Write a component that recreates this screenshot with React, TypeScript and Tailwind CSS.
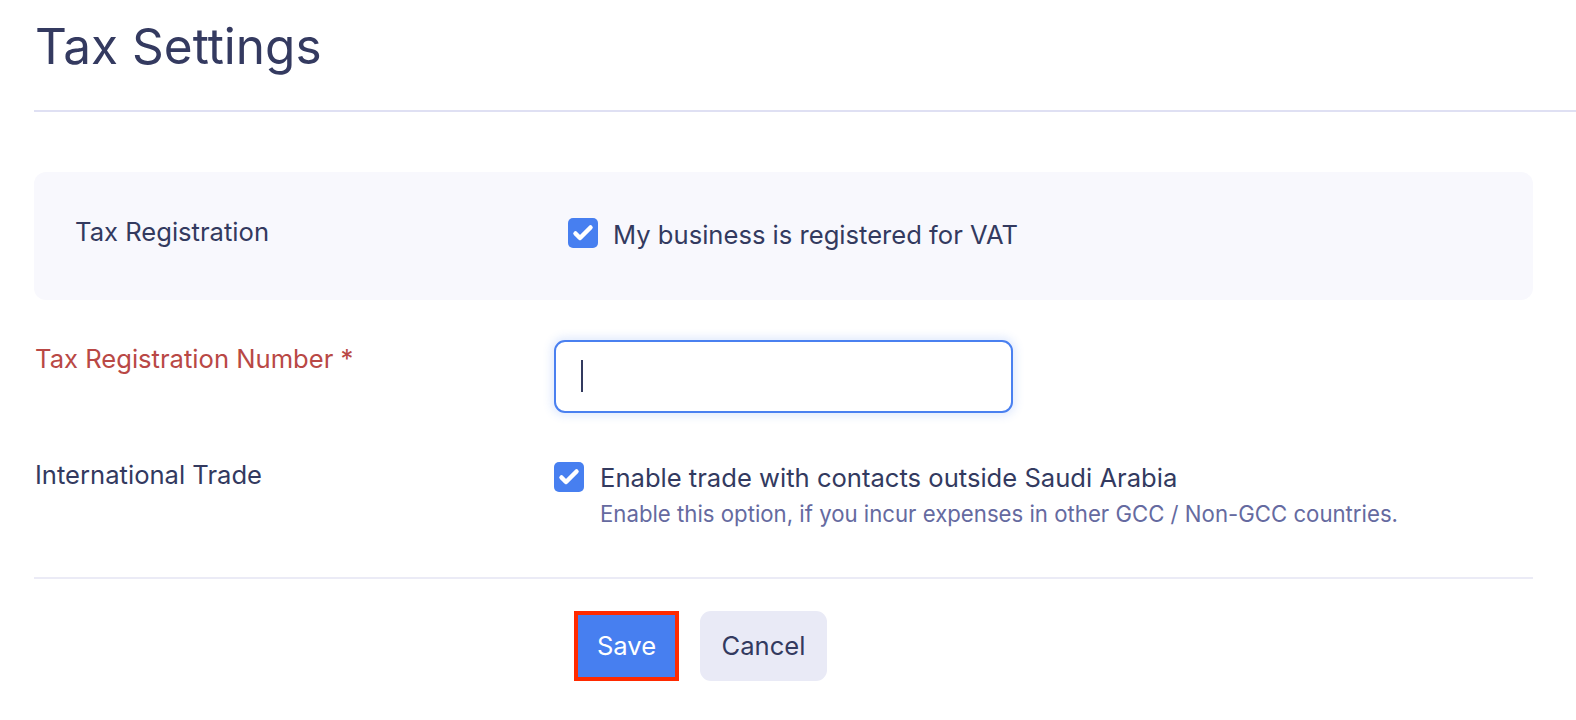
import React, { useState } from 'react';

function Check({ checked, onChange }: { checked: boolean; onChange: () => void }) {
  return (
    <button
      type="button"
      onClick={onChange}
      className={`flex h-[30px] w-[30px] shrink-0 items-center justify-center rounded-[5px] ${checked ? 'bg-[#477ff0]' : 'border-2 border-[#c9cce0] bg-white'}`}
    >
      {checked && (
        <svg viewBox="0 0 30 30" className="h-[30px] w-[30px]" fill="none" stroke="white" strokeWidth={4.5} strokeLinecap="round" strokeLinejoin="round">
          <path d="M7.5 15.5l4.5 4.5L22.5 9.5" />
        </svg>
      )}
    </button>
  );
}

export default function App() {
  const [vat, setVat] = useState(true);
  const [intl, setIntl] = useState(true);
  const [trn, setTrn] = useState('');

  return (
    <div className="h-[720px] overflow-hidden bg-white text-[#333a5f]" style={{ fontFamily: 'Inter, "Noto Sans", sans-serif' }}>
      <div className="pl-[34px]">
        <h1 className="mt-[16px] pl-[1px] text-[49.5px] font-normal leading-[60px] text-[#343a60]">Tax Settings</h1>
        <div className="mt-[34px] h-[2px] bg-[#dfe0f3]" />
      </div>

      <div className="pl-[34px] pr-[43px]">
        <div className="mt-[60px] flex h-[128px] items-start rounded-[12px] bg-[#f8f8fd] pl-[41px] pt-[45px]">
          <div className="w-[493px] text-[25.6px] leading-[30px]">Tax Registration</div>
          <label className="mt-[1px] flex items-start gap-[15px]">
            <Check checked={vat} onChange={() => setVat(!vat)} />
            <span className="mt-[2px] text-[25.6px] leading-[30px]">My business is registered for VAT</span>
          </label>
        </div>

        <div className="mt-[40px] flex items-start">
          <div className="w-[520px] pl-[1px] pt-[4px] text-[25.6px] leading-[30px] text-[#b94845]">Tax Registration Number *</div>
          <div className="relative">
            <input
              value={trn}
              onChange={(e) => setTrn(e.target.value)}
              className="h-[73px] w-[459px] rounded-[11px] border-2 border-[#4a80f0] bg-white px-[26px] text-[25.6px] text-[#333a5f] caret-[#333a5f] shadow-[0_0_9px_3px_rgba(74,128,240,0.16)] outline-none"
            />
            {trn === '' && <span className="pointer-events-none absolute left-[27px] top-[20px] h-[32px] w-[2px] bg-[#333a5f]" />}
          </div>
        </div>

        <div className="mt-[47px] flex items-start">
          <div className="w-[520px] pl-[1px] text-[25.6px] leading-[30px]">International Trade</div>
          <div className="flex items-start gap-[16px]">
            <div className="mt-[2px]">
              <Check checked={intl} onChange={() => setIntl(!intl)} />
            </div>
            <div className="pt-[3px]">
              <div className="text-[25.6px] leading-[30px]">Enable trade with contacts outside Saudi Arabia</div>
              <div className="mt-[7px] text-[22.2px] leading-[27px] text-[#656aa0]">
                Enable this option, if you incur expenses in other GCC / Non-GCC countries.
              </div>
            </div>
          </div>
        </div>

        <div className="mt-[50px] h-[2px] bg-[#ebebf6]" />

        <div className="mt-[32px] flex gap-[21px] pl-[540px]">
          <button className="h-[70px] w-[105px] border-4 border-[#ff2a00] bg-[#477ff0] text-[25.6px] font-normal text-white">
            Save
          </button>
          <button className="h-[70px] w-[127px] rounded-[11px] bg-[#e9eaf6] text-[25.6px] text-[#333a5f]">
            Cancel
          </button>
        </div>
      </div>
    </div>
  );
}
